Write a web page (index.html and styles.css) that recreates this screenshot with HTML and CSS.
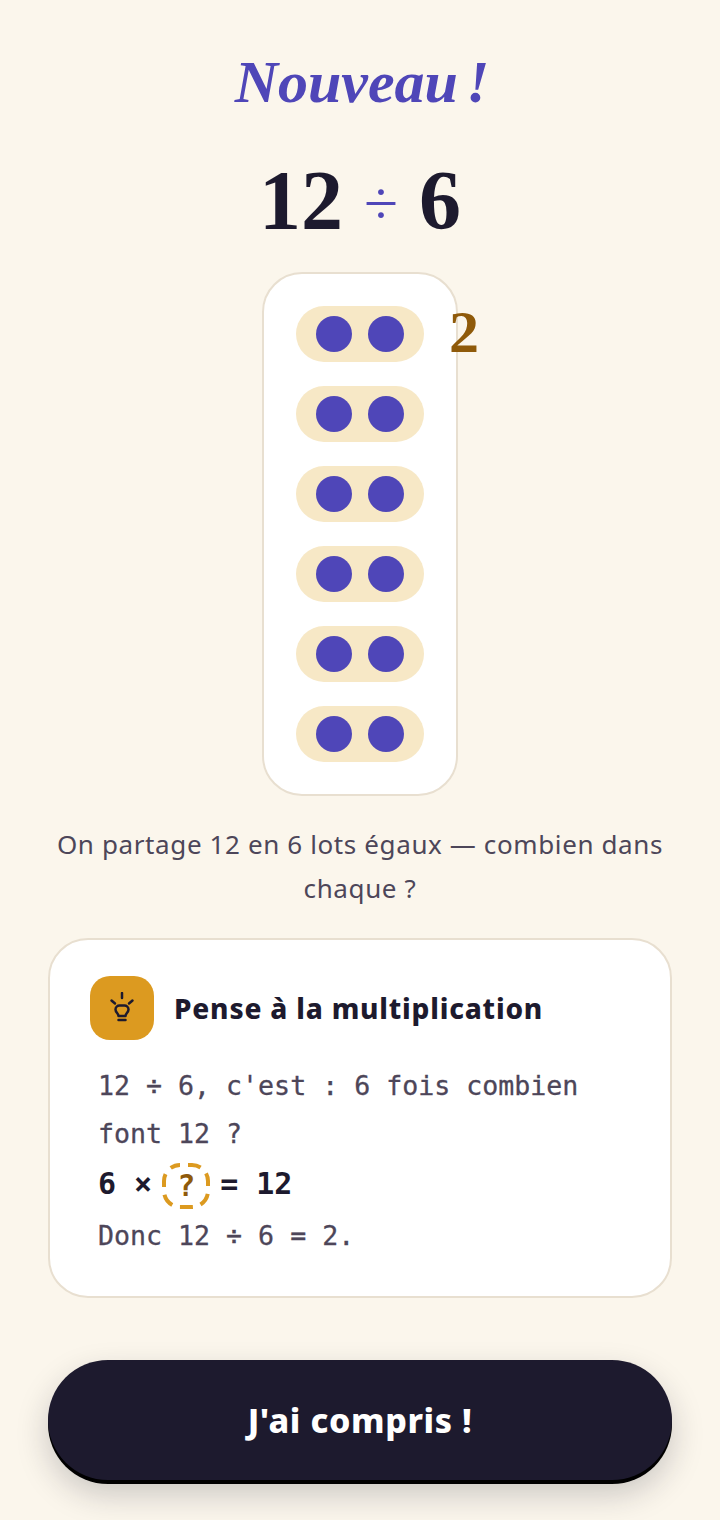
FILE: index.html
```html
<!DOCTYPE html>
<html lang="fr">
  <head>
    <meta charset="UTF-8" />
    <meta name="viewport" content="width=device-width, initial-scale=1" />
    <title>Nouveau !</title>
    <link rel="stylesheet" href="styles.css">
  </head>
  <body>
    <div class="screen">
      <h1 class="title">Nouveau !</h1>
      <div class="operation">12 <span class="operator">÷</span> 6</div>

      <div class="lots">
        <div class="lot"><span class="dot"></span><span class="dot"></span></div>
        <div class="lot"><span class="dot"></span><span class="dot"></span></div>
        <div class="lot"><span class="dot"></span><span class="dot"></span></div>
        <div class="lot"><span class="dot"></span><span class="dot"></span></div>
        <div class="lot"><span class="dot"></span><span class="dot"></span></div>
        <div class="lot"><span class="dot"></span><span class="dot"></span></div>
        <span class="count">2</span>
      </div>

      <p class="question">On partage 12 en 6 lots égaux — combien dans chaque ?</p>

      <div class="hint">
        <div class="hint-head">
          <div class="hint-icon">
            <svg width="28" height="32" viewBox="0 0 28 32" fill="none" stroke="#1d1a2e" stroke-width="2.5" stroke-linecap="round" stroke-linejoin="round">
              <path d="M14 1v5" />
              <path d="M3.500 8.500l3.500 3" />
              <path d="M24.500 8.500l-3.500 3" />
              <path d="M10.500 24c0-2.500-3-3.500-3-6.500 0-2.500 2-4 4-4h5c2 0 4 1.500 4 4 0 3-3 4-3 6.500z" />
              <path d="M10.500 28h7" />
            </svg>
          </div>
          <h2 class="hint-title">Pense à la multiplication</h2>
        </div>
        <div class="hint-body">
          <p class="hint-line">12 ÷ 6, c'est : 6 fois combien font 12 ?</p>
          <p class="hint-sum">
            <span>6 ×</span>
            <span class="blank">?
              <svg class="blank-ring" width="48" height="46" viewBox="0 0 48 46" fill="none">
                <rect x="2" y="2" width="44" height="42" rx="16" stroke="#dc9a20" stroke-width="4" stroke-dasharray="13 8" stroke-dashoffset="-8" />
              </svg>
            </span>
            <span>= 12</span>
          </p>
          <p class="hint-line">Donc 12 ÷ 6 = 2.</p>
        </div>
      </div>

      <button class="next" type="button">J'ai compris !</button>
    </div>
  </body>
</html>
```

FILE: styles.css
```css
html,
body {
  margin: 0;
  padding: 0;
}
body {
  background-color: #fbf6ec;
  font-family: "Noto Sans", Arial, sans-serif;
  color: #1d1a2e;
}
.screen {
  box-sizing: border-box;
  width: 720px;
  height: 1520px;
  padding: 48px 48px 0;
  display: flex;
  flex-direction: column;
  align-items: center;
}
.title {
  margin: 0;
  padding-left: 4px;
  font-family: "Liberation Serif", serif;
  font-style: italic;
  font-weight: bold;
  font-size: 60px;
  line-height: 68px;
  word-spacing: -7px;
  color: #4f46b8;
}
.operation {
  margin-top: 36px;
  font-family: "Liberation Serif", serif;
  font-weight: bold;
  font-size: 84px;
  line-height: 98px;
  height: 100px;
}
.operator {
  font-weight: normal;
  font-size: 62px;
  line-height: 0;
  vertical-align: 5px;
  color: #4f46b8;
}
.lots {
  position: relative;
  box-sizing: border-box;
  margin-top: 20px;
  width: 196px;
  padding: 32px;
  background-color: #fff;
  border: 2px solid #e8dfd0;
  border-radius: 40px;
  display: flex;
  flex-direction: column;
  gap: 24px;
}
.lot {
  height: 56px;
  background-color: #f7e8c6;
  border-radius: 28px;
  display: flex;
  justify-content: center;
  align-items: center;
  gap: 16px;
}
.dot {
  width: 36px;
  height: 36px;
  border-radius: 50%;
  background-color: #4f46b8;
}
.count {
  position: absolute;
  top: 26px;
  left: 185px;
  font-family: "Liberation Serif", serif;
  font-weight: bold;
  font-size: 60px;
  line-height: 64px;
  color: #8f5a0a;
}
.question {
  margin: 26px 0 0;
  font-size: 26px;
  line-height: 44px;
  letter-spacing: 0.62px;
  text-align: center;
  color: #4d4659;
}
.hint {
  box-sizing: border-box;
  margin-top: 28px;
  width: 624px;
  height: 360px;
  padding: 36px 40px;
  background-color: #fff;
  border: 2px solid #e8dfd0;
  border-radius: 40px;
}
.hint-head {
  display: flex;
  align-items: center;
  gap: 20px;
}
.hint-icon {
  width: 64px;
  height: 64px;
  border-radius: 20px;
  background-color: #dc9a20;
  display: flex;
  justify-content: center;
  align-items: center;
}
.hint-title {
  margin: 0;
  font-size: 28px;
  font-weight: 800;
  letter-spacing: 0.8px;
}
.hint-body {
  margin-top: 22px;
  padding: 0 8px;
  font-family: "DejaVu Sans Mono", "Liberation Mono", monospace;
  font-size: 26.6px;
}
.hint-line {
  margin: 0;
  line-height: 48px;
  color: #4d4659;
  -webkit-text-stroke: 0.3px #4d4659;
}
.hint-sum {
  margin: 0 0 4px;
  height: 50px;
  display: flex;
  align-items: center;
  gap: 10px;
  font-size: 30px;
  font-weight: bold;
}
.blank {
  position: relative;
  width: 48px;
  height: 46px;
  margin-top: 6px;
  line-height: 46px;
  text-align: center;
  color: #8f5a0a;
}
.blank-ring {
  position: absolute;
  top: 0;
  left: 0;
}
.next {
  margin-top: 62px;
  width: 624px;
  height: 120px;
  flex-shrink: 0;
  border: none;
  border-radius: 60px;
  background-color: #1d1a2e;
  color: #fff;
  font-family: "Noto Sans", Arial, sans-serif;
  font-size: 34px;
  font-weight: 800;
  letter-spacing: 0.6px;
  box-shadow: 0 4px 0 #000, 0 14px 32px rgba(29, 26, 46, 0.22);
}
```
